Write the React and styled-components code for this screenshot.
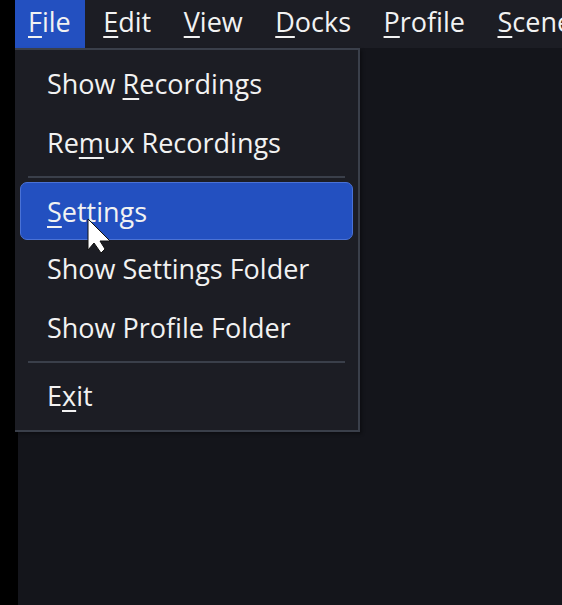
import React from 'react'
import styled, { createGlobalStyle } from 'styled-components'

const GlobalStyle = createGlobalStyle`
  html, body {
    margin: 0;
    padding: 0;
    background: #000;
  }
  body {
    font-family: "Open Sans", "Noto Sans", sans-serif;
    overflow: hidden;
  }
`

const Page = styled.div`
  width: 562px;
  height: 605px;
  padding-left: 15px;
  box-sizing: border-box;
  overflow: hidden;
`

const Window = styled.div`
  position: relative;
  height: 100%;
  display: flex;
  flex-direction: column;
`

const MenuBar = styled.div`
  height: 48px;
  flex: none;
  display: flex;
  background: #1c1d24;
  white-space: nowrap;
  overflow: hidden;
`

const Workspace = styled.div`
  flex: 1;
  margin-left: 3px;
  background: #14151b;
`

const MenuTitle = styled.div`
  height: 48px;
  box-sizing: border-box;
  padding: 0 14.5px 5px 13px;
  margin-right: 5px;
  display: flex;
  align-items: center;
  font-size: 27px;
  color: #f2f2f2;
  background: ${p => (p.$active ? '#2350c0' : 'transparent')};
`

const Key = styled.span`
  text-decoration: underline;
  text-decoration-thickness: 1.5px;
  text-underline-offset: 4px;
`

const Dropdown = styled.div`
  position: absolute;
  left: 0;
  top: 48px;
  width: 345px;
  height: 384px;
  box-sizing: border-box;
  padding: 4px 5px 0 5px;
  background: #1c1d24;
  border: solid #3a3f4a;
  border-width: 2px 2px 2px 0;
  box-shadow: 2px 2px 3px rgba(0, 0, 0, 0.35);
`

const Item = styled.div`
  height: ${p => (p.$selected ? '58px' : '59px')};
  margin-bottom: ${p => (p.$selected ? '-1px' : '0')};
  box-sizing: border-box;
  padding: ${p => (p.$selected ? '1px' : '0')} 0 0 26px;
  display: flex;
  align-items: center;
  font-size: 27px;
  color: #f2f2f2;
  border-radius: 7px;
  background: ${p => (p.$selected ? '#2350c0' : 'transparent')};
  border: ${p => (p.$selected ? '1px solid #4a72d6' : '1px solid transparent')};
`

const Separator = styled.div`
  height: 2px;
  margin: 4px 8px ${p => (p.$wide ? '4px' : '3px')} 8px;
  background: #3a3f4a;
`

const Cursor = styled.svg`
  position: absolute;
  left: 72px;
  top: 218px;
  width: 26px;
  height: 38px;
`

const App = () => (
  <Page>
    <GlobalStyle />
    <Window>
      <MenuBar>
        <MenuTitle $active><span><Key>F</Key>ile</span></MenuTitle>
        <MenuTitle><span><Key>E</Key>dit</span></MenuTitle>
        <MenuTitle><span><Key>V</Key>iew</span></MenuTitle>
        <MenuTitle><span><Key>D</Key>ocks</span></MenuTitle>
        <MenuTitle><span><Key>P</Key>rofile</span></MenuTitle>
        <MenuTitle><span><Key>S</Key>cene</span></MenuTitle>
      </MenuBar>
      <Workspace />
      <Dropdown>
        <Item><span>Show <Key>R</Key>ecordings</span></Item>
        <Item><span>Re<Key>m</Key>ux Recordings</span></Item>
        <Separator $wide />
        <Item $selected><span><Key>S</Key>ettings</span></Item>
        <Item><span>Show Settings Folder</span></Item>
        <Item><span>Show Profile Folder</span></Item>
        <Separator />
        <Item><span>E<Key>x</Key>it</span></Item>
      </Dropdown>
      <Cursor viewBox="0 0 26 38">
        <path
          d="M1 1 L1 32 L7 25 L14 35 L18 31 L13 23 L23 23 Z"
          fill="#fff"
          stroke="#111"
          strokeWidth="1"
          strokeLinejoin="round"
        />
      </Cursor>
    </Window>
  </Page>
)

export default App
